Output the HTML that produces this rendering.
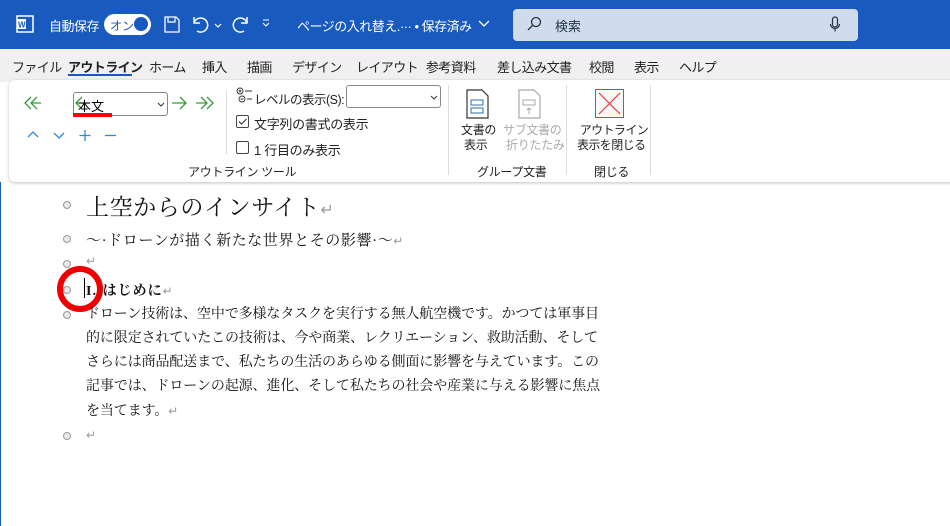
<!DOCTYPE html>
<html><head><meta charset="utf-8"><style>
*{margin:0;padding:0;box-sizing:border-box}
body{width:950px;height:526px;overflow:hidden;background:#fff;font-family:"Liberation Sans","Noto Sans CJK JP",sans-serif;position:relative}
.a{position:absolute;white-space:nowrap}
#top{position:absolute;left:0;top:0;width:950px;height:49px;background:#185abd;color:#fff;font-size:13px}
#tabs{position:absolute;left:0;top:49px;width:950px;height:33px;background:#f0f0f0;font-size:13px;color:#222;letter-spacing:-0.6px}
#rib{position:absolute;left:9px;top:80px;width:950px;height:102px;background:#fff;border-radius:6px;box-shadow:0 1px 3px rgba(0,0,0,.25)}
.s{font-size:12px;color:#222;letter-spacing:-0.3px}
.doc{font-family:"Liberation Serif","Noto Serif CJK JP",serif;color:#111}
.b{position:absolute;left:63px;width:8px;height:8px;border:1.5px solid #999;border-radius:50%;background:#e8e8e8}
.r{color:#999;font-size:12px}
</style></head><body>
<div style="position:absolute;left:0;top:182px;width:1px;height:344px;background:#185abd"></div>
<div id="top">
 <svg class="a" style="left:16px;top:15px" width="18" height="18"><rect x="1" y="1" width="16" height="16" fill="none" stroke="#fff" stroke-width="1.5"/><rect x="1" y="4" width="9" height="10" fill="#fff"/><text x="2" y="12.5" font-size="8" font-weight="bold" fill="#185abd" font-family="Liberation Sans">W</text></svg>
 <span class="a" style="left:49px;top:16px;letter-spacing:-0.5px">自動保存</span>
 <div class="a" style="left:104px;top:14px;width:47px;height:21px;border-radius:11px;background:#fff"></div>
 <span class="a" style="left:110px;top:17px;color:#185abd;font-size:12px">オン</span>
 <div class="a" style="left:134px;top:17px;width:14px;height:14px;border-radius:50%;background:#185abd"></div>
 <svg class="a" style="left:163px;top:15px" width="18" height="19"><path d="M2 2h11l3 3v12H2z" fill="none" stroke="#fff" stroke-width="1.3"/><path d="M5 2v5h7V2" fill="none" stroke="#fff" stroke-width="1.2"/></svg>
 <svg class="a" style="left:191px;top:14px" width="36" height="20"><path d="M3 3v6h6M3 9a7 7 0 1 1 3 8" fill="none" stroke="#fff" stroke-width="1.5"/><path d="M24 10l3 3 3-3" fill="none" stroke="#fff" stroke-width="1.2"/></svg>
 <svg class="a" style="left:230px;top:14px" width="20" height="20"><path d="M17 3v6h-6M17 9a7 7 0 1 0-3 8" fill="none" stroke="#fff" stroke-width="1.5"/></svg>
 <svg class="a" style="left:261px;top:18px" width="10" height="10"><path d="M2 2h6M2 5l3 3 3-3" fill="none" stroke="#fff" stroke-width="1.1"/></svg>
 <span class="a" style="left:297px;top:16px;letter-spacing:-0.5px">ページの入れ替え.··· • 保存済み</span>
 <svg class="a" style="left:478px;top:20px" width="12" height="8"><path d="M1 1l5 5 5-5" fill="none" stroke="#fff" stroke-width="1.3"/></svg>
 <div class="a" style="left:513px;top:9px;width:345px;height:32px;background:#d0dcec;border-radius:4px"></div>
 <svg class="a" style="left:526px;top:16px" width="16" height="16"><circle cx="10" cy="6" r="4.5" fill="none" stroke="#234" stroke-width="1.3"/><path d="M7 9L2 14" stroke="#234" stroke-width="1.3"/></svg>
 <span class="a" style="left:555px;top:16px;color:#234">検索</span>
 <svg class="a" style="left:829px;top:16px" width="12" height="18"><rect x="3.5" y="1" width="5" height="10" rx="2.5" fill="none" stroke="#234" stroke-width="1.2"/><path d="M1.5 8a4.5 4.5 0 0 0 9 0M6 12.5v3" fill="none" stroke="#234" stroke-width="1.2"/></svg>
</div>
<div id="tabs">
 <span class="a" style="left:12px;top:8px">ファイル</span>
 <span class="a" style="left:68px;top:8px;font-weight:bold">アウトライン</span>
 <div class="a" style="left:68px;top:25px;width:64px;height:2px;background:#185abd"></div>
 <span class="a" style="left:149px;top:8px">ホーム</span>
 <span class="a" style="left:202px;top:8px">挿入</span>
 <span class="a" style="left:247px;top:8px">描画</span>
 <span class="a" style="left:292px;top:8px">デザイン</span>
 <span class="a" style="left:356px;top:8px">レイアウト</span>
 <span class="a" style="left:426px;top:8px">参考資料</span>
 <span class="a" style="left:497px;top:8px">差し込み文書</span>
 <span class="a" style="left:589px;top:8px">校閲</span>
 <span class="a" style="left:634px;top:8px">表示</span>
 <span class="a" style="left:679px;top:8px">ヘルプ</span>
</div>
<div id="rib"></div>
<svg class="a" style="left:24px;top:96px" width="196" height="14"><g fill="none" stroke="#3a9a3a" stroke-width="1.3"><path d="M7 1L1 7l6 6M13 1L7 7l6 6M7 7h10"/><path d="M58 1l-6 6 6 6M52 7h14"/><path d="M156 1l6 6-6 6M148 7h14"/><path d="M177 1l6 6-6 6M183 1l6 6-6 6M172 7h10"/></g></svg>
<div class="a" style="left:73px;top:92px;width:95px;height:24px;border:1px solid #888;border-radius:3px"></div>
<span class="a" style="left:78px;top:96px;font-size:13px">本文</span>
<svg class="a" style="left:157px;top:102px" width="8" height="5"><path d="M1 1l3 3 3-3" fill="none" stroke="#333"/></svg>
<div class="a" style="left:73px;top:113px;width:39px;height:4px;background:#f00"></div>
<svg class="a" style="left:26px;top:128px" width="120" height="14"><g fill="none" stroke="#2b88d8" stroke-width="1.3"><path d="M2 9l5-5 5 5"/><path d="M28 5l5 5 5-5"/><path d="M59 2v11M53.5 7.5h11"/><path d="M79 7.5h11"/></g></svg>
<div class="a" style="left:226px;top:91px;width:1px;height:63px;background:#ddd"></div>
<svg class="a" style="left:236px;top:87px" width="17" height="17"><g fill="none" stroke="#333" stroke-width="0.9"><circle cx="4" cy="4" r="3"/><path d="M2.5 4h3M4 2.5v3M9 4h7"/><circle cx="6" cy="12" r="3"/><path d="M4.5 12h3M11 12h5"/></g></svg>
<span class="a s" style="left:254px;top:89px;font-size:12.5px;letter-spacing:-0.5px">レベルの表示(S):</span>
<div class="a" style="left:346px;top:85px;width:95px;height:23px;border:1px solid #888;border-radius:3px;background:#fff"></div>
<svg class="a" style="left:430px;top:95px" width="8" height="5"><path d="M1 1l3 3 3-3" fill="none" stroke="#333"/></svg>
<div class="a" style="left:236px;top:115px;width:13px;height:13px;border:1px solid #444;border-radius:2px"></div>
<svg class="a" style="left:236px;top:115px" width="13" height="13"><path d="M3 6.5l2.5 2.5 5-5" fill="none" stroke="#333" stroke-width="1.1"/></svg>
<span class="a s" style="left:254px;top:114px;font-size:13px">文字列の書式の表示</span>
<div class="a" style="left:236px;top:141px;width:13px;height:13px;border:1px solid #444;border-radius:2px"></div>
<span class="a s" style="left:254px;top:140px;font-size:13px">1 行目のみ表示</span>
<span class="a s" style="left:188px;top:163px">アウトライン ツール</span>
<div class="a" style="left:448px;top:85px;width:1px;height:90px;background:#ddd"></div>
<svg class="a" style="left:466px;top:89px" width="24" height="30"><path d="M1 1h15l6 6v22H1z" fill="#fff" stroke="#333" stroke-width="1.2"/><rect x="5" y="11" width="12" height="5" fill="none" stroke="#2b6cb0"/><rect x="5" y="19" width="12" height="5" fill="none" stroke="#2b6cb0"/></svg>
<svg class="a" style="left:518px;top:89px" width="24" height="30"><path d="M1 1h15l6 6v22H1z" fill="#fff" stroke="#aaa" stroke-width="1.2"/><rect x="5" y="11" width="12" height="5" fill="none" stroke="#aaa"/><path d="M11 25v-6M9 21l2-2 2 2" fill="none" stroke="#aaa"/></svg>
<span class="a s" style="left:461px;top:123px;line-height:15px">文書の<br>&nbsp;表示</span>
<span class="a s" style="left:503px;top:123px;line-height:15px;color:#aaa">サブ文書の<br>&nbsp;折りたたみ</span>
<span class="a s" style="left:477px;top:163px">グループ文書</span>
<div class="a" style="left:566px;top:85px;width:1px;height:90px;background:#ddd"></div>
<svg class="a" style="left:595px;top:89px" width="29" height="29"><rect x="0.5" y="0.5" width="28" height="28" fill="#f8f8f8" stroke="#e33"/><path d="M4 4l21 21M25 4L4 25" stroke="#e33" stroke-width="1.2"/></svg>
<span class="a s" style="left:577px;top:123px;line-height:15px;letter-spacing:-0.6px">&nbsp;アウトライン<br>表示を閉じる</span>
<span class="a s" style="left:594px;top:163px">閉じる</span>
<div class="a" style="left:650px;top:85px;width:1px;height:90px;background:#ddd"></div>

<div class="b" style="top:201px"></div>
<span class="a doc" style="left:86px;top:189px;font-size:23px;letter-spacing:0.6px">上空からのインサイト<span class="r" style="font-size:16px">↵</span></span>
<div class="b" style="top:235px"></div>
<span class="a doc" style="left:86px;top:229px;font-size:15px;letter-spacing:0.6px">～·ドローンが描く新たな世界とその影響·～<span class="r">↵</span></span>
<div class="b" style="top:260px"></div><span class="a r" style="left:86px;top:254px">↵</span>
<div class="b" style="top:286px"></div>
<span class="a doc" style="left:86px;top:280px;font-size:14px;font-weight:bold;letter-spacing:1px">I.·はじめに<span class="r" style="font-weight:normal">↵</span></span>
<div class="a" style="left:84px;top:278px;width:1px;height:20px;background:#000"></div>
<div class="a" style="left:57px;top:266px;width:46px;height:46px;border:6px solid #e00;border-radius:50%"></div>
<div class="b" style="top:311px"></div>
<div class="a doc" style="left:86px;top:303px;width:522px;white-space:normal;font-size:14px;line-height:24px;letter-spacing:-0.1px">ドローン技術は、空中で多様なタスクを実行する無人航空機です。かつては軍事目的に限定されていたこの技術は、今や商業、レクリエーション、救助活動、そしてさらには商品配送まで、私たちの生活のあらゆる側面に影響を与えています。この記事では、ドローンの起源、進化、そして私たちの社会や産業に与える影響に焦点を当てます。<span class="r">↵</span></div>
<div class="b" style="top:432px"></div><span class="a r" style="left:86px;top:428px">↵</span>
</body></html>
